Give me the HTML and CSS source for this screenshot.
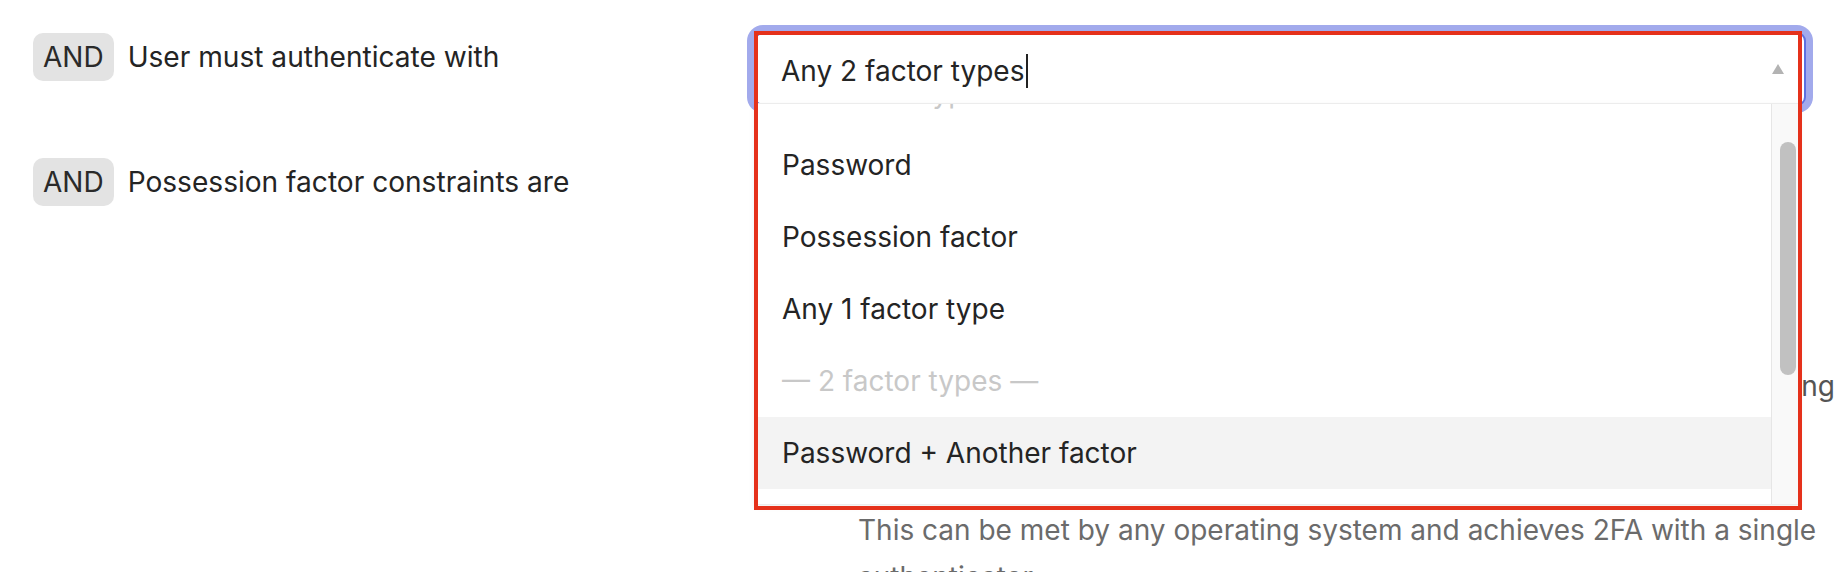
FILE: index.html
```html
<!DOCTYPE html>
<html lang="en">
<head>
<meta charset="utf-8">
<title>Authentication policy rule</title>
<link rel="stylesheet" href="styles.css">
</head>
<body>
<div class="page">
  <div class="rule-row row-first">
    <div class="cond">
      <span class="badge">AND</span>
      <span class="cond-label">User must authenticate with</span>
    </div>
    <div class="field">
      <div class="select">
        <div class="control">
          <span class="value">Any 2 factor types</span><span class="caret"></span>
          <span class="arrow"></span>
        </div>
        <div class="menu">
          <div class="menu-viewport">
            <ul class="options">
              <li class="group">— 1 factor type —</li>
              <li class="option">Password</li>
              <li class="option">Possession factor</li>
              <li class="option">Any 1 factor type</li>
              <li class="group">— 2 factor types —</li>
              <li class="option active">Password + Another factor</li>
              <li class="option">Any 2 factor types</li>
            </ul>
          </div>
          <div class="scrollbar"><div class="thumb"></div></div>
        </div>
        <div class="annotation"></div>
      </div>
    </div>
  </div>

  <div class="rule-row">
    <div class="cond">
      <span class="badge">AND</span>
      <span class="cond-label">Possession factor constraints are</span>
    </div>
    <div class="field constraints">
      <p class="hidden-line">Phishing-resistant authenticators are required when signing</p>
      <div class="check-label"><span class="box"></span>Hardware protected</div>
      <p class="desc">This can be met by any operating system and achieves 2FA with a single authenticator.</p>
    </div>
  </div>
</div>
</body>
</html>
```

FILE: styles.css
```css
* { box-sizing: border-box; }

html, body {
  margin: 0;
  background: #ffffff;
}

body {
  font-family: Inter, "Noto Sans", sans-serif;
  font-size: 28px;
  color: #242424;
  overflow: hidden;
}

.page {
  padding: 32px 3px 0 33px;
}

.rule-row {
  display: grid;
  grid-template-columns: 721px 1fr;
}

.row-first {
  margin-bottom: 51px;
}

.cond {
  display: flex;
  align-items: center;
  gap: 14px;
  height: 48px;
  margin-top: 1px;
}

.badge {
  display: flex;
  align-items: center;
  height: 48px;
  padding: 0 10px;
  border-radius: 10px;
  background: #e3e3e3;
  color: #2a2a2a;
}

.cond-label {
  color: #242424;
  font-size: 28.1px;
}

.select {
  position: relative;
  z-index: 5;
  width: 1052px;
}

.control {
  display: flex;
  align-items: center;
  height: 74px;
  padding: 4px 20px 0 25px;
  border: 2px solid #5d6fe0;
  border-radius: 9px;
  background: #ffffff;
  box-shadow: 0 0 0 7px #a2aaec;
}

.caret {
  width: 2px;
  height: 34px;
  margin-left: 2px;
  background: #222222;
}

.arrow {
  margin-left: auto;
  margin-top: -4px;
  width: 0;
  height: 0;
  border-left: 6px solid transparent;
  border-right: 6px solid transparent;
  border-bottom: 10px solid #b3b3b3;
}

.menu {
  position: absolute;
  top: 71px;
  left: 0;
  width: 1046px;
  height: 402px;
  display: flex;
  overflow: hidden;
  background: #ffffff;
  border: 1px solid #ececec;
  box-shadow: 0 2px 6px rgba(0, 0, 0, 0.06);
}

.menu-viewport {
  flex: 1;
  overflow: hidden;
}

.options {
  list-style: none;
  margin: -47px 0 0;
  padding: 0;
}

.options li {
  display: flex;
  align-items: center;
  height: 72px;
  padding-left: 27px;
}

.group {
  color: #c8c8c8;
}

.option {
  color: #242424;
}

.option.active {
  background: #f3f3f3;
}

.scrollbar {
  width: 28px;
  padding: 38px 0 0 8px;
  border-left: 1px solid #e6e6e6;
  background: #f9f9f9;
}

.thumb {
  width: 16px;
  height: 233px;
  border-radius: 8px;
  background: #c1c1c1;
}

.annotation {
  position: absolute;
  top: -1px;
  left: 0;
  width: 1048px;
  height: 479px;
  border: 4px solid #e5311b;
  pointer-events: none;
}

.constraints {
  padding-top: 207px;
}

.hidden-line {
  margin: 0;
  line-height: 44px;
  text-align: right;
  color: #555555;
}

.check-label {
  display: flex;
  align-items: center;
  gap: 20px;
  margin-top: 55px;
  height: 44px;
  padding-left: 48px;
}

.box {
  width: 28px;
  height: 28px;
  border: 2px solid #8a8a8a;
  border-radius: 4px;
}

.desc {
  margin: 0;
  padding-left: 104px;
  line-height: 47px;
  color: #6b6b6b;
}
```
